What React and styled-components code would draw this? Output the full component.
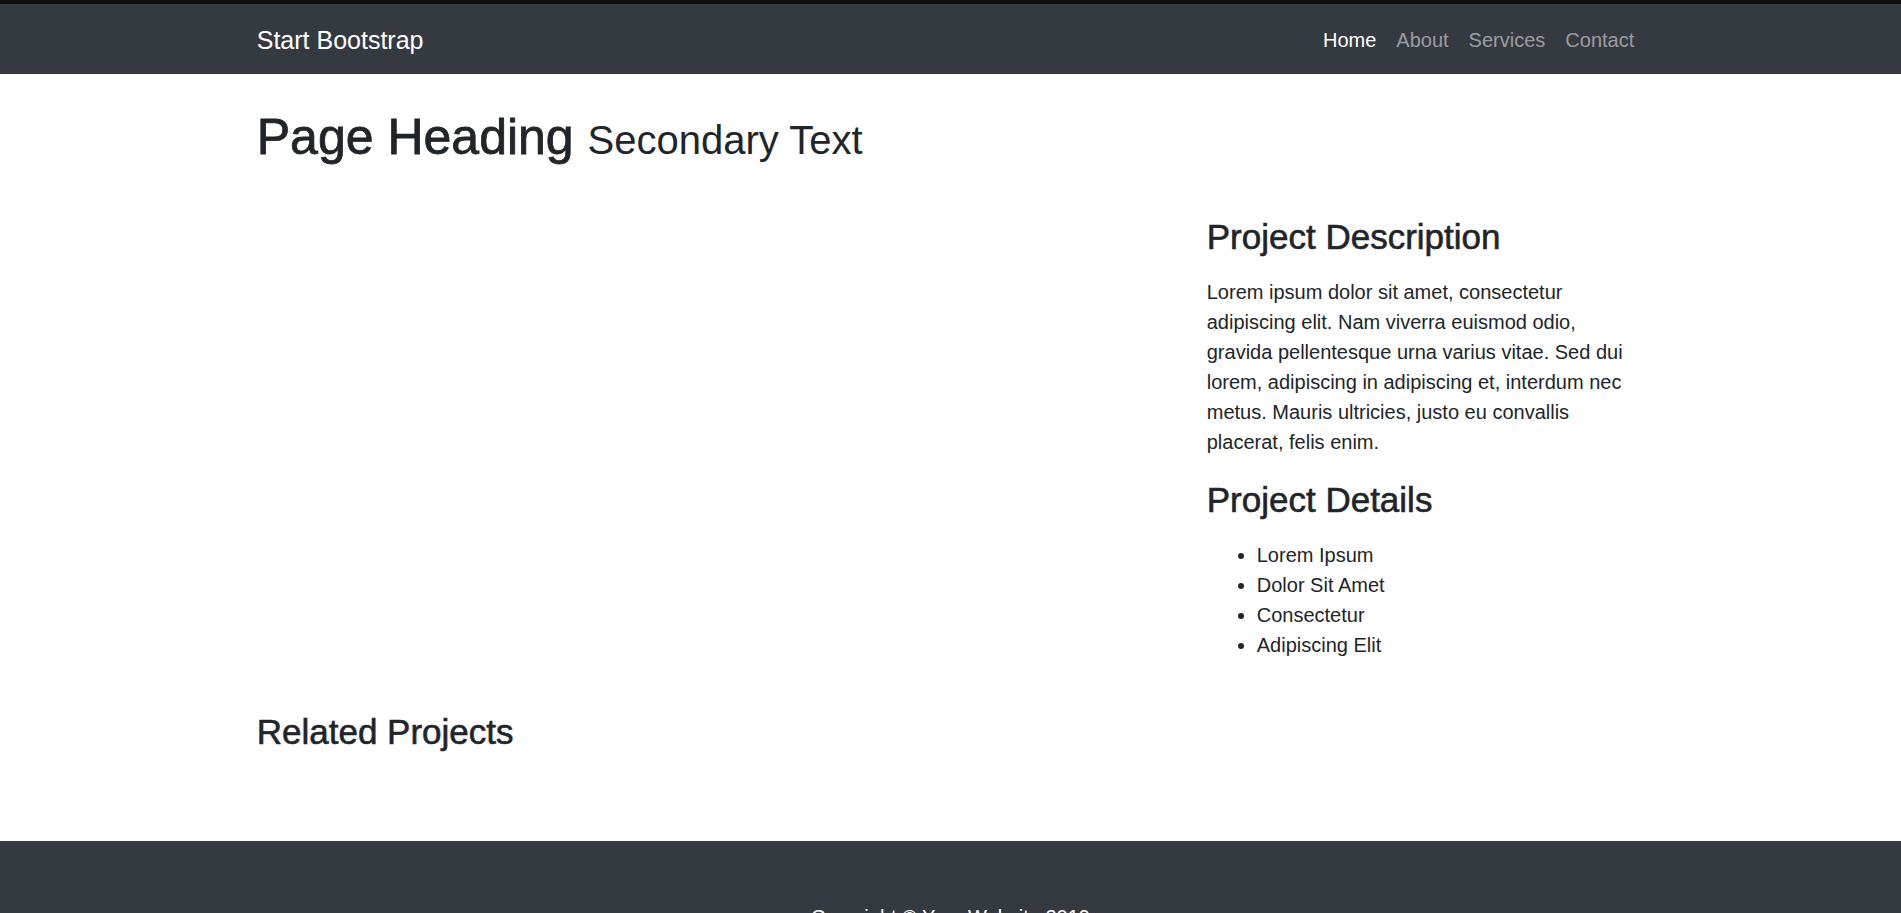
import React from "react";
import styled, { createGlobalStyle } from "styled-components";

const GlobalStyle = createGlobalStyle`
  html, body {
    margin: 0;
    padding: 0;
    background: #fff;
    scrollbar-width: none;
  }
  body::-webkit-scrollbar {
    display: none;
  }
  body {
    font-family: "Liberation Sans", Arial, sans-serif;
    font-size: 20px;
    line-height: 1.5;
    color: #212529;
  }
  * {
    box-sizing: border-box;
  }
`;

const TopStrip = styled.div`
  height: 4px;
  background: #0e0e0e;
`;

const Container = styled.div`
  width: 100%;
  max-width: 1425px;
  margin: 0 auto;
  padding: 0 18.75px;
`;

const Navbar = styled.nav`
  background: #343a40;
  padding: 10px 0;
`;

const NavInner = styled(Container)`
  display: flex;
  align-items: center;
  justify-content: space-between;
`;

const Brand = styled.a`
  display: inline-block;
  padding: 8px 0 4.5px;
  font-size: 25px;
  line-height: 37.5px;
  color: #fff;
  text-decoration: none;
`;

const NavList = styled.ul`
  display: flex;
  list-style: none;
  margin: 0;
  padding: 0;
`;

const NavLink = styled.a`
  display: block;
  padding: 11px 10px 9px;
  color: ${(p) => (p.$active ? "#fff" : "rgba(255, 255, 255, 0.5)")};
  text-decoration: none;
`;

const PageTitle = styled.h1`
  margin: 30px 0 27px;
  padding-top: 3px;
  font-size: 50px;
  font-weight: 500;
  line-height: 1.2;
  -webkit-text-stroke: 0.8px currentColor;

  small {
    font-size: 80%;
    font-weight: 400;
    -webkit-text-stroke: 0;
  }
`;

const Row = styled.div`
  display: flex;
  margin: 0 -18.75px;
`;

const Col = styled.div`
  flex: 0 0 ${(p) => (p.$span / 12) * 100}%;
  max-width: ${(p) => (p.$span / 12) * 100}%;
  padding: 0 18.75px;
`;

const SectionTitle = styled.h3`
  margin: ${(p) => p.$spacing || "20px"} 0 ${(p) => (p.$spacing ? "28px" : "18px")};
  padding-top: 2px;
  font-size: 35px;
  font-weight: 500;
  line-height: 1.2;
  -webkit-text-stroke: 0.6px currentColor;
`;

const Text = styled.p`
  margin: 0 0 19px;
  padding-top: 1px;
`;

const DetailsList = styled.ul`
  margin: 0 0 19px;
  padding: 1px 0 0 50px;
`;

const RelatedRow = styled(Row)`
  min-height: 30px;
  margin-bottom: 30px;
`;

const Footer = styled.footer`
  background: #343a40;
  padding: 60px 0;
`;

const Copyright = styled.p`
  margin: 0;
  padding-top: 1px;
  text-align: center;
  color: #fff;
`;

const links = [
  { label: "Home", active: true },
  { label: "About" },
  { label: "Services" },
  { label: "Contact" },
];

const details = ["Lorem Ipsum", "Dolor Sit Amet", "Consectetur", "Adipiscing Elit"];

export default function App() {
  return (
    <>
      <GlobalStyle />
      <TopStrip />
      <Navbar>
        <NavInner>
          <Brand href="#">Start Bootstrap</Brand>
          <NavList>
            {links.map((link) => (
              <li key={link.label}>
                <NavLink href="#" $active={link.active}>
                  {link.label}
                </NavLink>
              </li>
            ))}
          </NavList>
        </NavInner>
      </Navbar>

      <Container>
        <PageTitle>
          Page Heading <small>Secondary Text</small>
        </PageTitle>

        <Row>
          <Col $span={8} />
          <Col $span={4}>
            <SectionTitle>Project Description</SectionTitle>
            <Text>
              Lorem ipsum dolor sit amet, consectetur adipiscing elit. Nam viverra
              euismod odio, gravida pellentesque urna varius vitae. Sed dui lorem,
              adipiscing in adipiscing et, interdum nec metus. Mauris ultricies,
              justo eu convallis placerat, felis enim.
            </Text>
            <SectionTitle>Project Details</SectionTitle>
            <DetailsList>
              {details.map((item) => (
                <li key={item}>{item}</li>
              ))}
            </DetailsList>
          </Col>
        </Row>

        <SectionTitle $spacing="30px">Related Projects</SectionTitle>
        <RelatedRow />
      </Container>

      <Footer>
        <Container>
          <Copyright>Copyright &copy; Your Website 2019</Copyright>
        </Container>
      </Footer>
    </>
  );
}
